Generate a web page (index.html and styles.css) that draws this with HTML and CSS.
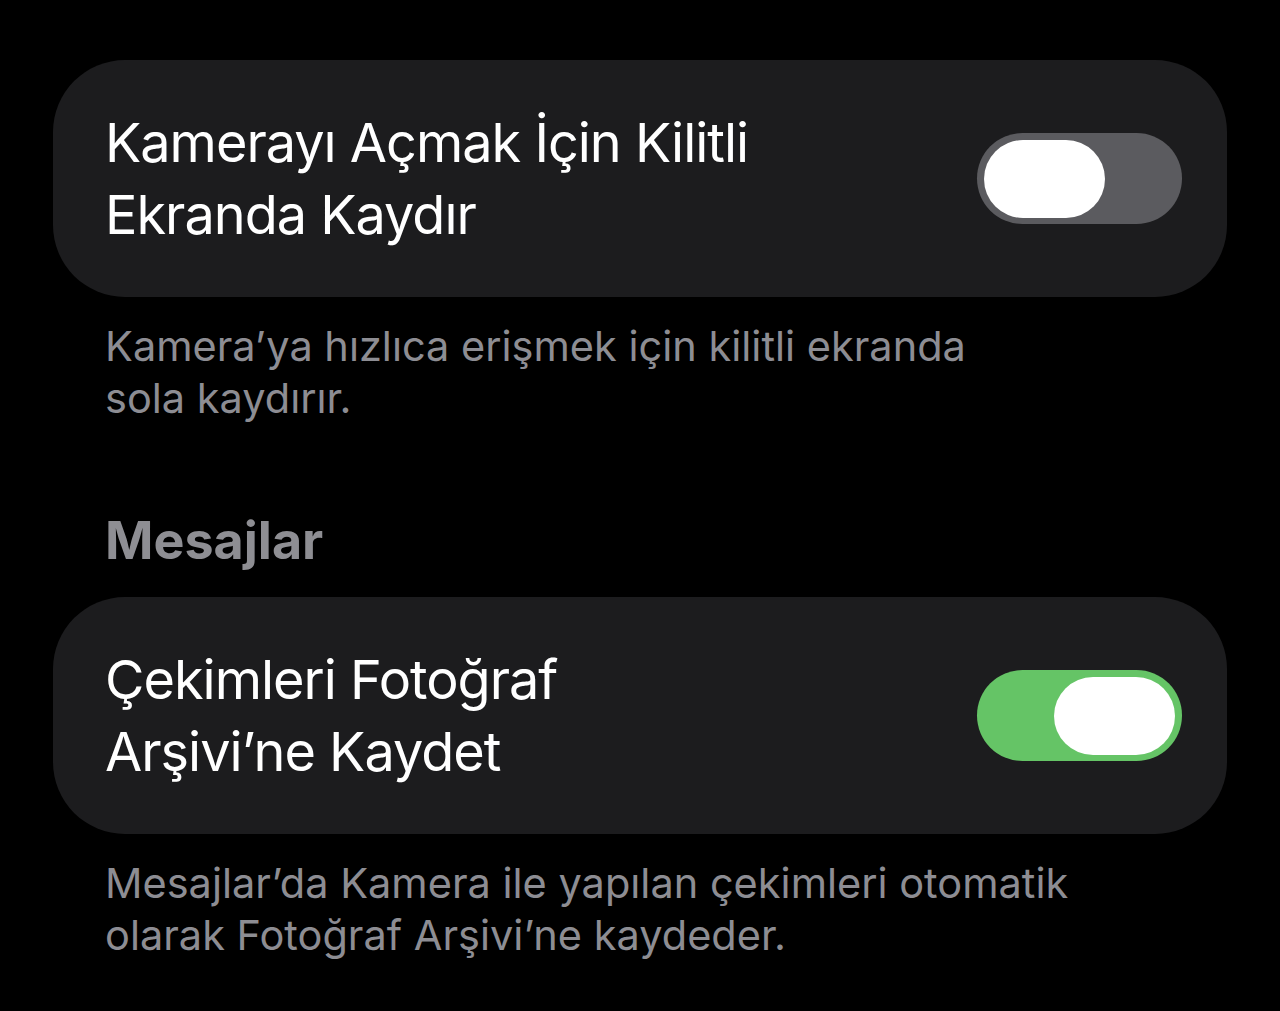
FILE: index.html
```html
<!DOCTYPE html>
<html lang="tr">
<head>
    <meta charset="UTF-8">
    <meta name="viewport" content="width=device-width, initial-scale=1.0">
    <title>Kamera</title>
    <link rel="stylesheet" href="styles.css">
</head>
<body>
    <div class="settings">
        <div class="group">
            <div class="row">
                <span class="row-label">Kamerayı Açmak İçin Kilitli<br>Ekranda Kaydır</span>
                <span class="switch"><span class="knob"></span></span>
            </div>
        </div>
        <p class="footer">Kamera’ya hızlıca erişmek için kilitli ekranda<br>sola kaydırır.</p>

        <h2 class="section-title">Mesajlar</h2>
        <div class="group">
            <div class="row">
                <span class="row-label">Çekimleri Fotoğraf<br>Arşivi’ne Kaydet</span>
                <span class="switch on"><span class="knob"></span></span>
            </div>
        </div>
        <p class="footer">Mesajlar’da Kamera ile yapılan çekimleri otomatik<br>olarak Fotoğraf Arşivi’ne kaydeder.</p>
    </div>
</body>
</html>
```

FILE: styles.css
```css
body {
    margin: 0;
    background: #000;
    font-family: Inter, "Noto Sans", sans-serif;
    color: #fff;
}
.settings {
    padding: 60px 53px 0 53px;
}
.group {
    background: #1c1c1e;
    border-radius: 72px;
}
.row {
    display: flex;
    align-items: center;
    justify-content: space-between;
    height: 237px;
    padding: 0 45px 0 52px;
}
.row-label {
    font-size: 54px;
    line-height: 72px;
    letter-spacing: -1px;
}
.switch {
    display: flex;
    align-items: center;
    width: 205px;
    height: 91px;
    padding: 0 7px;
    box-sizing: border-box;
    border-radius: 46px;
    background: #5b5b5f;
}
.switch.on {
    background: #65c466;
    justify-content: flex-end;
}
.knob {
    width: 121px;
    height: 78px;
    border-radius: 39px;
    background: #fff;
}
.footer {
    margin: 0;
    padding: 23px 52px 0 52px;
    font-size: 41.5px;
    line-height: 52px;
    color: #8d8d93;
}
.section-title {
    margin: 0;
    padding: 85px 52px 24px 52px;
    font-size: 52px;
    line-height: 64px;
    font-weight: 700;
    color: #8e8e93;
}
```
